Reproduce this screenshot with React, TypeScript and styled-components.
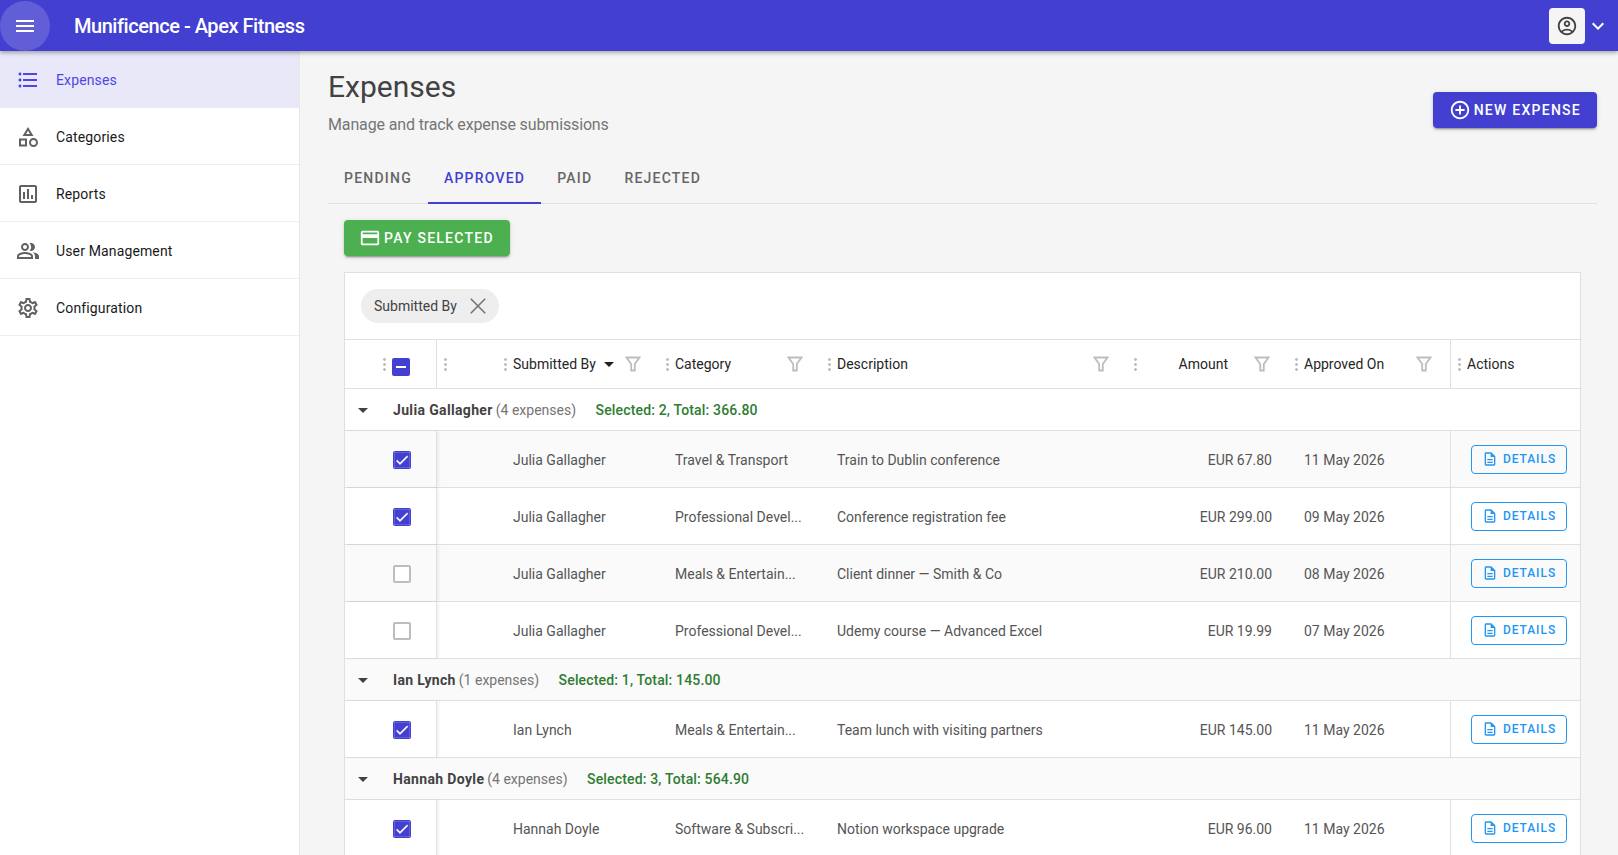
import React from "react";
import styled, { createGlobalStyle } from "styled-components";
import {
  MdMenu, MdKeyboardArrowDown, MdFormatListBulleted, MdOutlineCategory, MdOutlineAssessment,
  MdOutlinePeopleAlt, MdOutlineSettings, MdOutlineAccountCircle, MdAddCircleOutline,
  MdOutlineCreditCard, MdOutlineDescription, MdCheck, MdArrowDropDown,
} from "react-icons/md";

const Global = createGlobalStyle`
  html, body { margin: 0; padding: 0; height: 100%; overflow: hidden; background: #f5f5f5; }
  body { font-family: Roboto, "Liberation Sans", sans-serif; }
  * { box-sizing: border-box; }
`;

const INDIGO = "#4340d1";
const COLUMNS = "92px 60px 162px 162px 306px 161px 162px 1fr";

const Page = styled.div`
  height: 855px;
  display: flex;
  flex-direction: column;
  overflow: hidden;
`;
const AppBar = styled.header`
  height: 51px;
  flex: none;
  display: flex;
  align-items: center;
  background: ${INDIGO};
  color: #fff;
  box-shadow: 0 2px 4px rgba(0, 0, 0, 0.3);
  position: relative;
  z-index: 2;
`;
const MenuButton = styled.div`
  width: 50px;
  height: 50px;
  border-radius: 50%;
  background: rgba(255, 255, 255, 0.16);
  display: flex;
  align-items: center;
  justify-content: center;
  font-size: 24px;
`;
const AppTitle = styled.div`
  margin-left: 24px;
  font-size: 20px;
  font-weight: 500;
  letter-spacing: -0.46px;
  flex: 1;
`;
const AccountButton = styled.div`
  width: 36px;
  height: 36px;
  border-radius: 4px;
  background: #f5f5f5;
  color: #424242;
  display: flex;
  align-items: center;
  justify-content: center;
  font-size: 22px;
`;
const Chevron = styled.div`
  width: 25px;
  margin-right: 8px;
  display: flex;
  justify-content: center;
  font-size: 24px;
`;
const Body = styled.div`
  flex: 1;
  display: flex;
  min-height: 0;
`;
const Sidebar = styled.nav`
  width: 300px;
  flex: none;
  background: #fff;
  border-right: 1px solid #e8e8e8;
`;
const NavItem = styled.div<{ $active?: boolean }>`
  height: 57px;
  display: flex;
  align-items: center;
  padding: 1px 0 0 16px;
  gap: 16px;
  font-size: 14px;
  font-weight: 400;
  letter-spacing: 0.14px;
  color: ${(p) => (p.$active ? "#5046e5" : "#1a1a1a")};
  background: ${(p) => (p.$active ? "#e8e8f8" : "#fff")};
  border-bottom: 1px solid ${(p) => (p.$active ? "#e8e8f8" : "#eeeeee")};
  svg {
    font-size: 24px;
    color: ${(p) => (p.$active ? "#5046e5" : "#616161")};
  }
`;
const Main = styled.main`
  flex: 1;
  min-width: 0;
  padding: 16px 21px 0 28px;
`;
const TitleRow = styled.div`
  display: flex;
  justify-content: space-between;
  align-items: center;
`;
const Heading = styled.h1`
  margin: 0;
  font-size: 30px;
  font-weight: 400;
  line-height: 40px;
  color: #424242;
`;
const Subtitle = styled.p`
  margin: 6px 0 0;
  font-size: 16px;
  line-height: 24px;
  letter-spacing: -0.14px;
  color: #757575;
`;
const PrimaryButton = styled.div<{ $bg: string }>`
  display: inline-flex;
  align-items: center;
  height: 36px;
  padding: 0 16px;
  gap: 3px;
  border-radius: 4px;
  background: ${(p) => p.$bg};
  color: #fff;
  font-size: 14px;
  font-weight: 500;
  letter-spacing: 1.25px;
  text-transform: uppercase;
  box-shadow: 0 3px 1px -2px rgba(0,0,0,.2), 0 2px 2px rgba(0,0,0,.14), 0 1px 5px rgba(0,0,0,.12);
  svg { font-size: 22px; }
`;
const NewExpenseButton = styled(PrimaryButton)`
  margin-top: 16px;
`;
const PayButton = styled(PrimaryButton)`
  padding-left: 15px;
`;
const Tabs = styled.div`
  display: flex;
  margin-top: 17px;
  border-bottom: 1px solid #e0e0e0;
`;
const Tab = styled.div<{ $active?: boolean }>`
  height: 50px;
  padding: 0 16px;
  display: flex;
  align-items: center;
  font-size: 14px;
  font-weight: 500;
  letter-spacing: 1.22px;
  color: ${(p) => (p.$active ? INDIGO : "#666666")};
  border-bottom: 2px solid ${(p) => (p.$active ? INDIGO : "transparent")};
  margin-bottom: -1px;
`;
const Content = styled.div`
  padding: 16px 16px 0;
`;
const Table = styled.div`
  margin-top: 16px;
  background: #fff;
  border: 1px solid #e0e0e0;
  font-size: 14px;
`;
const GroupPanel = styled.div`
  height: 67px;
  padding-left: 16px;
  display: flex;
  align-items: center;
  border-bottom: 1px solid #e0e0e0;
`;
const Chip = styled.div`
  height: 34px;
  padding: 0 9px 0 13px;
  border-radius: 17px;
  background: #eeeeee;
  color: #424242;
  display: flex;
  align-items: center;
  gap: 9px;
`;
const ChipCloseSvg = styled.svg`
  width: 24px;
  height: 24px;
  flex: none;
`;
const ChipClose = () => (
  <ChipCloseSvg viewBox="0 0 24 24" fill="none" stroke="#757575" strokeWidth="1.6">
    <path d="M4.8 4.8 L19.2 19.2 M19.2 4.8 L4.8 19.2" />
  </ChipCloseSvg>
);
const HeaderRow = styled.div`
  display: grid;
  grid-template-columns: ${COLUMNS};
  height: 49px;
  border-bottom: 1px solid #e0e0e0;
`;
const HeaderCell = styled.div<{ $actions?: boolean }>`
  display: flex;
  align-items: center;
  padding: 0 18px 0 7px;
  font-weight: 450;
  color: #262626;
  ${(p) => (p.$actions ? "border-left: 1px solid #e0e0e0;" : "")}
`;
const SelectHeaderCell = styled(HeaderCell)`
  padding-left: 38px;
  border-right: 1px solid #e0e0e0;
`;
const Dots = styled.span`
  width: 3px;
  height: 15px;
  flex: none;
  margin-right: 6px;
  background-image: radial-gradient(circle, #bdbdbd 1.3px, transparent 1.5px);
  background-size: 3px 5px;
`;
const Label = styled.span<{ $trail?: number }>`
  white-space: nowrap;
  margin-right: ${(p) => p.$trail ?? 0}px;
`;
const HeaderSpacer = styled.span`
  flex: 1;
`;
const SortCaret = styled(MdArrowDropDown)`
  font-size: 24px;
  color: #212121;
  margin: 0 -7px 0 1px;
  flex: none;
`;
const FilterSvg = styled.svg`
  width: 16px;
  height: 16px;
  flex: none;
  margin-left: 10px;
`;
const FilterIcon = () => (
  <FilterSvg viewBox="0 0 16 16" fill="none" stroke="#bdbdbd" strokeWidth="1.8">
    <path d="M1.5 1.5 H14.5 L9.8 8 V14.5 H6.2 V8 Z" strokeLinejoin="miter" />
  </FilterSvg>
);
const Checkbox = styled.span<{ $on?: boolean }>`
  width: 18px;
  height: 18px;
  flex: none;
  border-radius: 2px;
  display: inline-flex;
  align-items: center;
  justify-content: center;
  color: #fff;
  font-size: 16px;
  background: ${(p) => (p.$on ? INDIGO : "#fff")};
  border: 2px solid ${(p) => (p.$on ? INDIGO : "#bdbdbd")};
  svg { stroke: currentColor; stroke-width: 0.5; flex: none; }
`;
const Minus = styled.span`
  width: 10px;
  height: 2px;
  background: #fff;
`;
const HeaderCheck = styled(Checkbox)`
  margin-top: 5px;
`;
const GroupRow = styled.div<{ $odd: boolean }>`
  height: 42px;
  display: flex;
  align-items: center;
  padding-left: 6px;
  background: ${(p) => (p.$odd ? "#fafafa" : "#fff")};
  border-bottom: 1px solid #e0e0e0;
  color: #757575;
`;
const GroupCaret = styled(MdArrowDropDown)`
  font-size: 24px;
  color: #424242;
  flex: none;
  margin-right: 18px;
`;
const GroupName = styled.span`
  font-weight: 700;
  letter-spacing: 0.35px;
  color: #424242;
  margin-right: 3px;
`;
const GroupStats = styled.span`
  font-weight: 500;
  letter-spacing: 0.16px;
  color: #2e7d32;
  margin-left: 19.5px;
`;
const DataRow = styled.div<{ $odd: boolean }>`
  display: grid;
  grid-template-columns: ${COLUMNS};
  height: 57px;
  background: ${(p) => (p.$odd ? "#fafafa" : "#fff")};
  border-bottom: 1px solid #e0e0e0;
  color: #555555;
`;
const CheckCell = styled.div`
  display: flex;
  align-items: center;
  padding: 2px 0 0 48px;
  border-right: 1px solid #e0e0e0;
  box-shadow: 2px 0 3px rgba(0, 0, 0, 0.06);
`;
const Cell = styled.div<{ $right?: boolean }>`
  display: flex;
  align-items: center;
  padding: 1px 16px 0;
  white-space: nowrap;
  overflow: hidden;
  justify-content: ${(p) => (p.$right ? "flex-end" : "flex-start")};
`;
const ActionCell = styled.div`
  display: flex;
  align-items: center;
  padding-left: 20px;
  border-left: 1px solid #e0e0e0;
`;
const DetailsButton = styled.div`
  width: 96px;
  height: 29px;
  border: 1px solid #2196f3;
  border-radius: 4px;
  color: #2196f3;
  display: flex;
  align-items: center;
  justify-content: center;
  gap: 5px;
  font-size: 12px;
  font-weight: 500;
  letter-spacing: 0.95px;
  svg { font-size: 16px; }
`;

type Row = { name: string; on: boolean; cat: string; desc: string; amt: string; date: string };
type Group = { name: string; count: number; stats: string; rows: Row[] };

const groups: Group[] = [
  {
    name: "Julia Gallagher", count: 4, stats: "Selected: 2, Total: 366.80",
    rows: [
      { name: "Julia Gallagher", on: true, cat: "Travel & Transport", desc: "Train to Dublin conference", amt: "EUR 67.80", date: "11 May 2026" },
      { name: "Julia Gallagher", on: true, cat: "Professional Devel...", desc: "Conference registration fee", amt: "EUR 299.00", date: "09 May 2026" },
      { name: "Julia Gallagher", on: false, cat: "Meals & Entertain...", desc: "Client dinner — Smith & Co", amt: "EUR 210.00", date: "08 May 2026" },
      { name: "Julia Gallagher", on: false, cat: "Professional Devel...", desc: "Udemy course — Advanced Excel", amt: "EUR 19.99", date: "07 May 2026" },
    ],
  },
  {
    name: "Ian Lynch", count: 1, stats: "Selected: 1, Total: 145.00",
    rows: [{ name: "Ian Lynch", on: true, cat: "Meals & Entertain...", desc: "Team lunch with visiting partners", amt: "EUR 145.00", date: "11 May 2026" }],
  },
  {
    name: "Hannah Doyle", count: 4, stats: "Selected: 3, Total: 564.90",
    rows: [{ name: "Hannah Doyle", on: true, cat: "Software & Subscri...", desc: "Notion workspace upgrade", amt: "EUR 96.00", date: "11 May 2026" }],
  },
];

const nav = [
  { label: "Expenses", Icon: MdFormatListBulleted, active: true },
  { label: "Categories", Icon: MdOutlineCategory },
  { label: "Reports", Icon: MdOutlineAssessment },
  { label: "User Management", Icon: MdOutlinePeopleAlt },
  { label: "Configuration", Icon: MdOutlineSettings },
];

export default function App() {
  let index = 0;
  return (
    <Page>
      <Global />
      <AppBar>
        <MenuButton><MdMenu /></MenuButton>
        <AppTitle>Munificence - Apex Fitness</AppTitle>
        <AccountButton><MdOutlineAccountCircle /></AccountButton>
        <Chevron><MdKeyboardArrowDown /></Chevron>
      </AppBar>
      <Body>
        <Sidebar>
          {nav.map(({ label, Icon, active }) => (
            <NavItem key={label} $active={active}><Icon />{label}</NavItem>
          ))}
        </Sidebar>
        <Main>
          <TitleRow>
            <div>
              <Heading>Expenses</Heading>
              <Subtitle>Manage and track expense submissions</Subtitle>
            </div>
            <NewExpenseButton $bg={INDIGO}><MdAddCircleOutline />New Expense</NewExpenseButton>
          </TitleRow>
          <Tabs>
            <Tab>PENDING</Tab>
            <Tab $active>APPROVED</Tab>
            <Tab>PAID</Tab>
            <Tab>REJECTED</Tab>
          </Tabs>
          <Content>
            <PayButton $bg="#4caf50"><MdOutlineCreditCard />Pay Selected</PayButton>
            <Table>
              <GroupPanel>
                <Chip>Submitted By<ChipClose /></Chip>
              </GroupPanel>
              <HeaderRow>
                <SelectHeaderCell>
                  <Dots /><HeaderCheck $on><Minus /></HeaderCheck>
                </SelectHeaderCell>
                <HeaderCell><Dots /></HeaderCell>
                <HeaderCell><Dots /><Label>Submitted By</Label><SortCaret /><HeaderSpacer /><FilterIcon /></HeaderCell>
                <HeaderCell><Dots /><Label>Category</Label><HeaderSpacer /><FilterIcon /></HeaderCell>
                <HeaderCell><Dots /><Label>Description</Label><HeaderSpacer /><FilterIcon /></HeaderCell>
                <HeaderCell><Dots /><HeaderSpacer /><Label $trail={16}>Amount</Label><FilterIcon /></HeaderCell>
                <HeaderCell><Dots /><Label>Approved On</Label><HeaderSpacer /><FilterIcon /></HeaderCell>
                <HeaderCell $actions><Dots /><Label>Actions</Label></HeaderCell>
              </HeaderRow>
              {groups.map((g) => (
                <React.Fragment key={g.name}>
                  <GroupRow $odd={index++ % 2 === 1}>
                    <GroupCaret />
                    <GroupName>{g.name}</GroupName>({g.count} expenses)
                    <GroupStats>{g.stats}</GroupStats>
                  </GroupRow>
                  {g.rows.map((r) => (
                    <DataRow key={r.desc} $odd={index++ % 2 === 1}>
                      <CheckCell>
                        <Checkbox $on={r.on}>{r.on && <MdCheck />}</Checkbox>
                      </CheckCell>
                      <div />
                      <Cell>{r.name}</Cell>
                      <Cell>{r.cat}</Cell>
                      <Cell>{r.desc}</Cell>
                      <Cell $right>{r.amt}</Cell>
                      <Cell>{r.date}</Cell>
                      <ActionCell>
                        <DetailsButton><MdOutlineDescription />DETAILS</DetailsButton>
                      </ActionCell>
                    </DataRow>
                  ))}
                </React.Fragment>
              ))}
            </Table>
          </Content>
        </Main>
      </Body>
    </Page>
  );
}
